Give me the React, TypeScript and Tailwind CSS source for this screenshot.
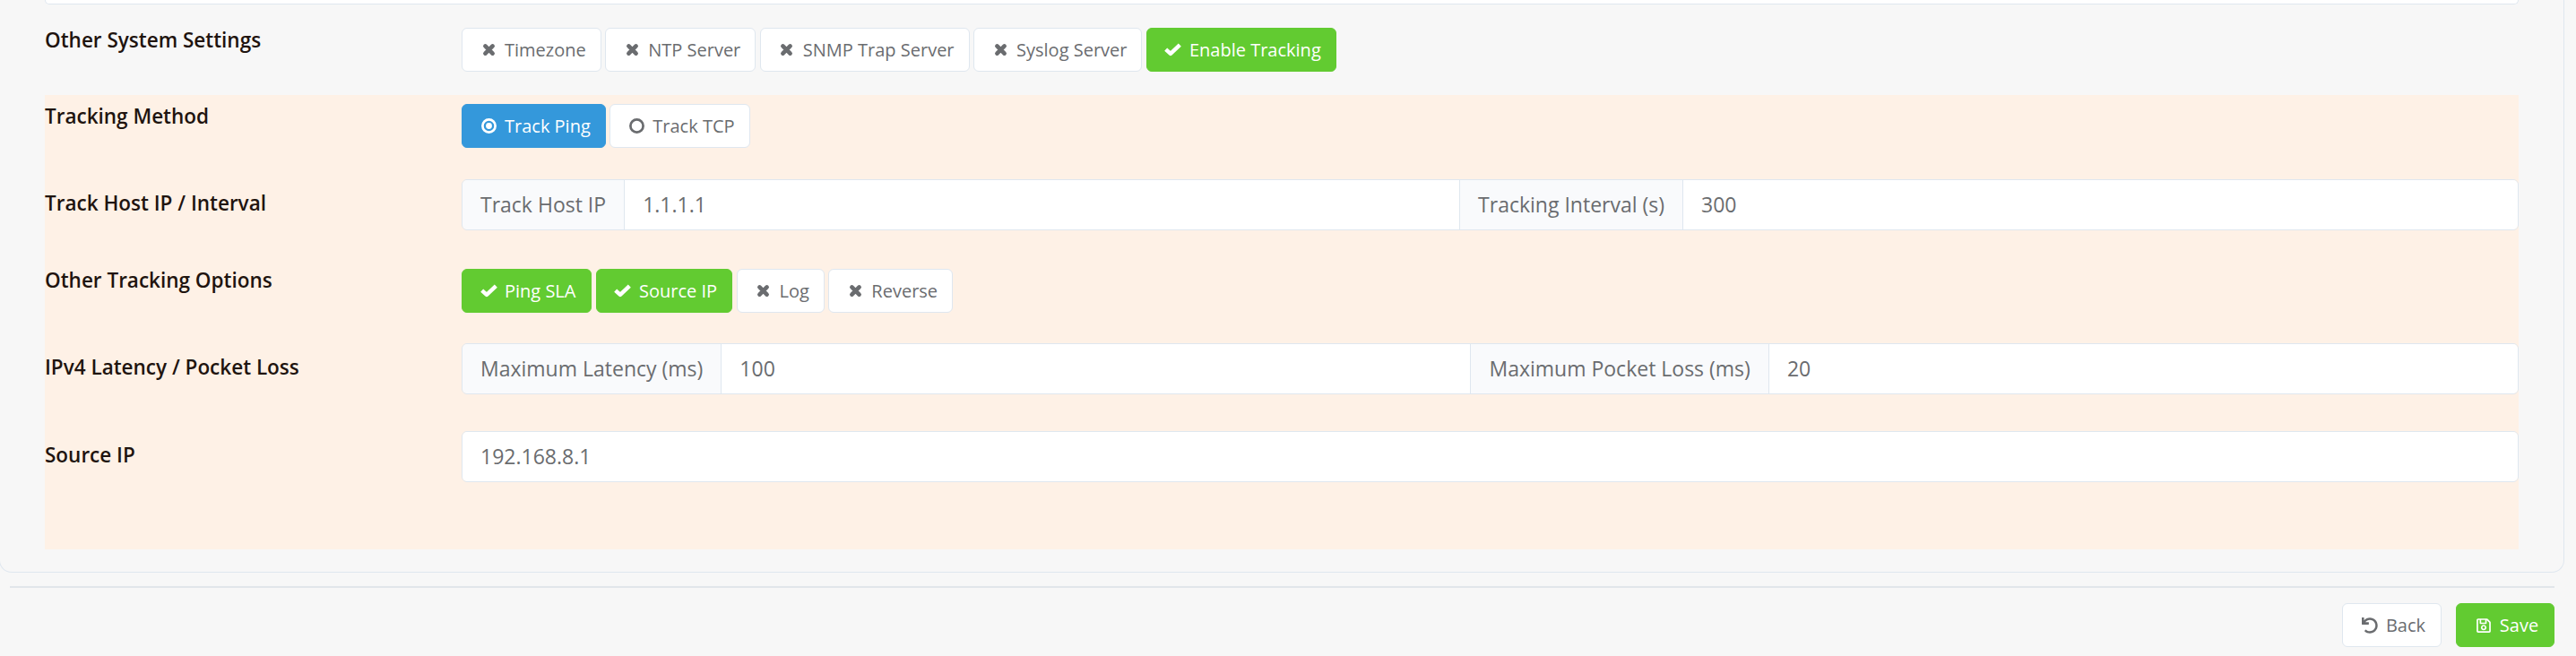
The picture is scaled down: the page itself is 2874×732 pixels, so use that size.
import { ReactNode } from "react";
import { FaRegSave, FaUndo } from "react-icons/fa";

function CrossIcon() {
  return (
    <svg viewBox="0 0 14 14" className="h-[15px] w-[15px]" fill="none" stroke="currentColor" strokeWidth="4.4" strokeLinecap="round">
      <path d="M3.2 3.2L10.8 10.8M10.8 3.2L3.2 10.8" />
    </svg>
  );
}

function CheckIcon() {
  return (
    <svg viewBox="0 0 18 14" className="h-[15px] w-[19px]" fill="none" stroke="currentColor" strokeWidth="4.2" strokeLinejoin="round">
      <path d="M1.6 6.6L6.6 11.2L16.4 2" />
    </svg>
  );
}

function RingIcon({ dot }: { dot?: boolean }) {
  return (
    <svg viewBox="0 0 17 17" className="h-[17px] w-[17px]" fill="none" stroke="currentColor" strokeWidth="2.7">
      <circle cx="8.5" cy="8.5" r="7.1" />
      {dot && <circle cx="8.5" cy="8.5" r="3.4" fill="currentColor" stroke="none" />}
    </svg>
  );
}

function ToggleButton({ active, blue, children, icon, className = "" }: { active?: boolean; blue?: boolean; children: string; icon?: ReactNode; className?: string }) {
  let colors = "border-[#dfe7ef] bg-white text-[#6a6c6f]";
  if (active) colors = "border-[#62cb31] bg-[#62cb31] text-white";
  if (blue) colors = "border-[#3498db] bg-[#3498db] text-white";
  return (
    <button className={`flex h-[49px] items-center rounded-[6px] border px-[16px] text-[20px] whitespace-nowrap ${colors} ${className}`}>
      <span className="mr-[5px] flex w-[26px] shrink-0 items-center justify-center">
        {icon ?? (active ? <CheckIcon /> : <CrossIcon />)}
      </span>
      {children}
    </button>
  );
}

function Row({ label, className, labelClass, children }: { label: string; className: string; labelClass: string; children: ReactNode }) {
  return (
    <div className={`flex ${className}`}>
      <div className={`w-[465px] shrink-0 text-[22.5px] leading-[28px] font-semibold text-[#1f140f] ${labelClass}`}>{label}</div>
      <div className="min-w-0 flex-1">{children}</div>
    </div>
  );
}

function Addon({ children }: { children: string }) {
  return (
    <div className="flex shrink-0 items-center border-x border-[#dfe7ef] bg-[#f9fafc] px-[20px] text-[23px] whitespace-nowrap text-[#6a6c6f] first:border-l-0">
      {children}
    </div>
  );
}

function Value({ children }: { children: string }) {
  return <div className="flex min-w-0 flex-1 items-center bg-white px-[20px] text-[23px] text-[#6a6c6f]">{children}</div>;
}

export default function App() {
  return (
    <div className="h-[732px] w-[2874px] overflow-hidden bg-[#f7f7f7] font-['Open_Sans',sans-serif]">
      {/* settings card, top is scrolled off */}
      <div className="mr-[13px] -ml-px h-[639px] rounded-b-[14px] border-x border-b border-[#dfe7ef] px-[50px]">
        <div className="h-[5px] rounded-b-[5px] border-x border-b border-[#dfe7ef] bg-white"></div>

        <Row label="Other System Settings" className="mt-[26px]" labelClass="">
          <div className="flex gap-[4.5px]">
            <ToggleButton>Timezone</ToggleButton>
            <ToggleButton>NTP Server</ToggleButton>
            <ToggleButton>SNMP Trap Server</ToggleButton>
            <ToggleButton>Syslog Server</ToggleButton>
            <ToggleButton active>Enable Tracking</ToggleButton>
          </div>
        </Row>

        <div className="mt-[26px] h-[507px] bg-[#fef1e6] pt-[10px]">
          <Row label="Tracking Method" className="" labelClass="">
            <div className="flex gap-[4.5px]">
              <ToggleButton active blue icon={<RingIcon dot />}>Track Ping</ToggleButton>
              <ToggleButton icon={<RingIcon />}>Track TCP</ToggleButton>
            </div>
          </Row>

          <Row label="Track Host IP / Interval" className="mt-[35px]" labelClass="pt-[13px]">
            <div className="flex h-[57px] overflow-hidden rounded-[6px] border border-[#dfe7ef]">
              <Addon>Track Host IP</Addon>
              <Value>1.1.1.1</Value>
              <Addon>Tracking Interval (s)</Addon>
              <Value>300</Value>
            </div>
          </Row>

          <Row label="Other Tracking Options" className="mt-[43px]" labelClass="-mt-px">
            <div className="flex gap-[4.5px]">
              <ToggleButton active className="pr-[17px]">Ping SLA</ToggleButton>
              <ToggleButton active>Source IP</ToggleButton>
              <ToggleButton>Log</ToggleButton>
              <ToggleButton>Reverse</ToggleButton>
            </div>
          </Row>

          <Row label="IPv4 Latency / Pocket Loss" className="mt-[34px]" labelClass="pt-[13px]">
            <div className="flex h-[57px] overflow-hidden rounded-[6px] border border-[#dfe7ef]">
              <Addon>Maximum Latency (ms)</Addon>
              <Value>100</Value>
              <Addon>Maximum Pocket Loss (ms)</Addon>
              <Value>20</Value>
            </div>
          </Row>

          <Row label="Source IP" className="mt-[41px]" labelClass="pt-[13px]">
            <div className="flex h-[57px] overflow-hidden rounded-[6px] border border-[#dfe7ef]">
              <Value>192.168.8.1</Value>
            </div>
          </Row>
        </div>
      </div>

      <div className="mt-[15px] mr-[24px] ml-[11px] border-t-2 border-[#e1e6ea]"></div>

      <div className="mt-[17px] mr-[24px] flex justify-end gap-[16px]">
        <ToggleButton className="w-[111px] justify-center" icon={<FaUndo className="h-[18px] w-[18px]" />}>Back</ToggleButton>
        <ToggleButton active className="w-[110px] justify-center" icon={<FaRegSave className="h-[18px] w-[18px]" />}>Save</ToggleButton>
      </div>
    </div>
  );
}
